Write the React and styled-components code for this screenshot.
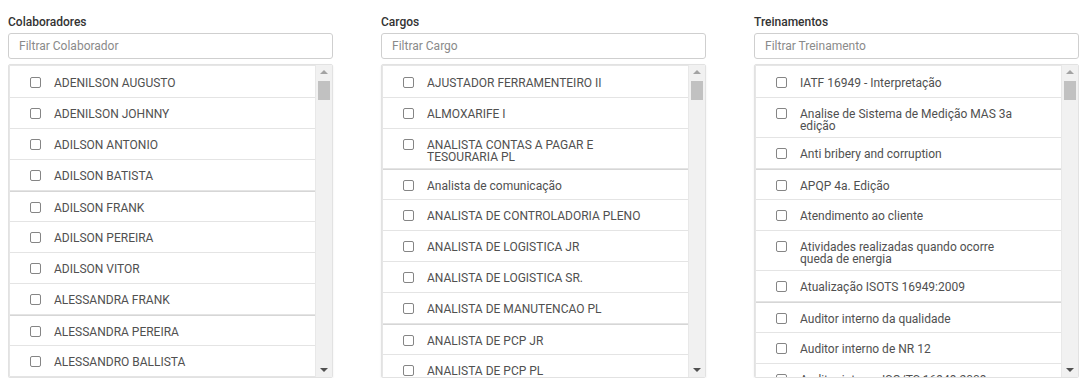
import React from "react";
import styled, { createGlobalStyle } from "styled-components";

const GlobalStyle = createGlobalStyle`
  body {
    margin: 8px;
    background: #fff;
    font-family: Roboto, "Liberation Sans", Arial, sans-serif;
  }
  * { box-sizing: border-box; }
`;

const COLUMNS = [
  {
    title: "Colaboradores",
    placeholder: "Filtrar Colaborador",
    items: [
      { label: "ADENILSON AUGUSTO" },
      { label: "ADENILSON JOHNNY" },
      { label: "ADILSON ANTONIO" },
      { label: "ADILSON BATISTA" },
      { label: "ADILSON FRANK", thick: true },
      { label: "ADILSON PEREIRA" },
      { label: "ADILSON VITOR" },
      { label: "ALESSANDRA FRANK" },
      { label: "ALESSANDRA PEREIRA", thick: true },
      { label: "ALESSANDRO BALLISTA" },
    ],
  },
  {
    title: "Cargos",
    placeholder: "Filtrar Cargo",
    items: [
      { label: "AJUSTADOR FERRAMENTEIRO II" },
      { label: "ALMOXARIFE I" },
      { label: "ANALISTA CONTAS A PAGAR E TESOURARIA PL" },
      { label: "Analista de comunicação", thick: true },
      { label: "ANALISTA DE CONTROLADORIA PLENO" },
      { label: "ANALISTA DE LOGISTICA JR" },
      { label: "ANALISTA DE LOGISTICA SR." },
      { label: "ANALISTA DE MANUTENCAO PL" },
      { label: "ANALISTA DE PCP JR", thick: true },
      { label: "ANALISTA DE PCP PL" },
    ],
  },
  {
    title: "Treinamentos",
    placeholder: "Filtrar Treinamento",
    items: [
      { label: "IATF 16949 - Interpretação" },
      { label: "Analise de Sistema de Medição MAS 3a edição" },
      { label: "Anti bribery and corruption" },
      { label: "APQP 4a. Edição", thick: true },
      { label: "Atendimento ao cliente" },
      { label: "Atividades realizadas quando ocorre queda de energia" },
      { label: "Atualização ISOTS 16949:2009" },
      { label: "Auditor interno da qualidade", thick: true },
      { label: "Auditor interno de NR 12" },
      { label: "Auditor interno ISO/TS 16949:2009" },
    ],
  },
];

export default function App() {
  return (
    <>
      <GlobalStyle />
      <Page>
        {COLUMNS.map((col) => (
          <FilterColumn key={col.title} {...col} />
        ))}
      </Page>
    </>
  );
}

function FilterColumn({ title, placeholder, items }) {
  return (
    <Column>
      <Title>{title}</Title>
      <FilterInput placeholder={placeholder} />
      <ListBox>
        <Rows>
          {items.map((it) => (
            <Row key={it.label} $thick={it.thick}>
              <Check type="checkbox" />
              <Label>{it.label}</Label>
            </Row>
          ))}
        </Rows>
        <Scrollbar>
          <Arrow $up />
          <Track>
            <Thumb />
          </Track>
          <Arrow />
        </Scrollbar>
      </ListBox>
    </Column>
  );
}

const Page = styled.div`
  display: grid;
  grid-template-columns: repeat(3, 1fr);
  column-gap: 48px;
  padding-top: 6px;
`;

const Column = styled.div`
  display: flex;
  flex-direction: column;
  min-width: 0;
`;

const Title = styled.div`
  font-size: 12px;
  font-weight: 500;
  color: #333;
  line-height: 16px;
  margin-bottom: 3px;
`;

const FilterInput = styled.input`
  height: 26px;
  border: 1px solid #cfcfcf;
  border-radius: 3px;
  padding: 0 10px;
  font-family: inherit;
  font-size: 12px;
  color: #444;
  outline: none;
  &::placeholder {
    color: #8a8a8a;
  }
`;

const ListBox = styled.div`
  margin-top: 5px;
  height: 314px;
  display: flex;
  border: 1px solid #e2e2e2;
  border-radius: 2px;
  box-shadow: 0 1px 2px rgba(0, 0, 0, 0.08);
  overflow: hidden;
`;

const Rows = styled.div`
  flex: 1;
  min-width: 0;
  overflow: hidden;
  padding-top: 1px;
  border-left: 1px solid #e6e6e6;
  border-top: 1px solid #e6e6e6;
`;

const Row = styled.label`
  display: flex;
  align-items: flex-start;
  gap: 13px;
  min-height: 31px;
  padding: 9px 20px 5px 20px;
  border-top: ${(p) => (p.$thick ? "1px solid #d6d6d6" : "0")};
  border-bottom: 1px solid #e4e4e4;
`;

const Check = styled.input`
  appearance: none;
  margin: 1px 0 0 0;
  width: 11px;
  height: 11px;
  flex: none;
  border: 1px solid #858585;
  border-radius: 2px;
  background: #fff;
`;

const Label = styled.span`
  margin-top: 1px;
  font-size: 12px;
  line-height: 12px;
  letter-spacing: 0;
  color: #505050;
  max-width: 222px;
`;

const Scrollbar = styled.div`
  width: 17px;
  flex: none;
  display: flex;
  flex-direction: column;
  background: #f1f1f1;
  border-left: 1px solid #e8e8e8;
`;

const Arrow = styled.div`
  height: 14px;
  flex: none;
  display: flex;
  justify-content: center;
  align-items: center;
  &::after {
    content: "";
    width: 0;
    height: 0;
    border-left: 4px solid transparent;
    border-right: 4px solid transparent;
    ${(p) =>
      p.$up
        ? "border-bottom: 4px solid #a3a3a3;"
        : "border-top: 4px solid #505050;"}
  }
`;

const Track = styled.div`
  flex: 1;
  padding: 2px 2px 0 2px;
`;

const Thumb = styled.div`
  height: 19px;
  background: #c1c1c1;
`;
